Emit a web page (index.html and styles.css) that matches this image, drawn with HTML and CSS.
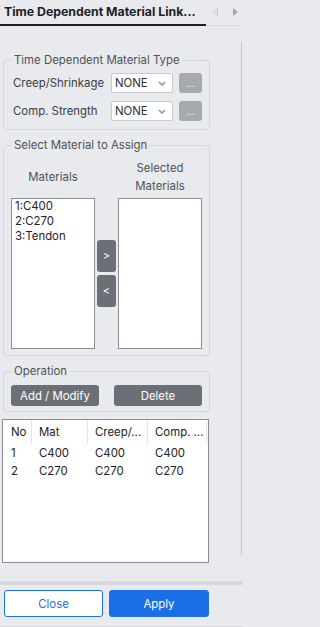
FILE: index.html
```html
<!DOCTYPE html>
<html>
<head>
<meta charset="utf-8">
<link rel="stylesheet" href="styles.css">
</head>
<body>
<div class="tabbar">
  <div class="tab">Time Dependent Material Link...</div>
  <div class="tab-arrows">
    <svg class="arr" width="5" height="8" viewBox="0 0 5 8"><path d="M4.5 0.5 L0.8 4 L4.5 7.5 Z" fill="none" stroke="#c9cacd" stroke-width="1"/></svg>
    <svg class="arr" width="5" height="8" viewBox="0 0 5 8"><path d="M0 0 L5 4 L0 8 Z" fill="#a7a9ad"/></svg>
  </div>
</div>
<div class="body">
  <div class="main">
    <fieldset class="group g1">
      <legend>Time Dependent Material Type</legend>
      <div class="row">
        <span class="label">Creep/Shrinkage</span>
        <div class="select"><span>NONE</span><svg width="8" height="5" viewBox="0 0 8 5"><path d="M1 1 L4 4 L7 1" fill="none" stroke="#8e9196" stroke-width="1.5"/></svg></div>
        <button class="dots">...</button>
      </div>
      <div class="row">
        <span class="label">Comp. Strength</span>
        <div class="select"><span>NONE</span><svg width="8" height="5" viewBox="0 0 8 5"><path d="M1 1 L4 4 L7 1" fill="none" stroke="#8e9196" stroke-width="1.5"/></svg></div>
        <button class="dots">...</button>
      </div>
    </fieldset>
    <fieldset class="group g2">
      <legend>Select Material to Assign</legend>
      <div class="assign">
        <div class="head">Materials</div>
        <div></div>
        <div class="head">Selected<br>Materials</div>
        <div class="list">
          <div>1:C400</div>
          <div>2:C270</div>
          <div>3:Tendon</div>
        </div>
        <div class="movers">
          <button class="mv">&gt;</button>
          <button class="mv">&lt;</button>
        </div>
        <div class="list"></div>
      </div>
    </fieldset>
    <fieldset class="group g3">
      <legend>Operation</legend>
      <div class="ops">
        <button class="op">Add / Modify</button>
        <button class="op">Delete</button>
      </div>
    </fieldset>
    <div class="table">
      <div class="th">No</div><div class="th">Mat</div><div class="th">Creep/...</div><div class="th">Comp. ...</div>
      <div class="td">1</div><div class="td">C400</div><div class="td">C400</div><div class="td">C400</div>
      <div class="td">2</div><div class="td">C270</div><div class="td">C270</div><div class="td">C270</div>
    </div>
  </div>
  <div class="scroll"></div>
</div>
<div class="footer">
  <button class="btn close">Close</button>
  <button class="btn apply">Apply</button>
</div>
</body>
</html>
```

FILE: styles.css
```css
* { box-sizing: border-box; }
html, body { margin: 0; padding: 0; }
body {
  width: 243px;
  height: 627px;
  overflow: hidden;
  background: #e9eaed;
  font-family: Inter, "Noto Sans", sans-serif;
  font-size: 11.4px;
  color: #3a3d42;
}
button { font-family: inherit; cursor: default; }

.tabbar {
  display: flex;
  height: 26px;
  border-bottom: 1px solid #dcdde0;
}
.tab {
  width: 206px;
  height: 26px;
  margin-bottom: -1px;
  border-bottom: 2px solid #1f2125;
  padding-left: 4px;
  font-size: 12.3px;
  font-weight: 700;
  line-height: 24px;
  color: #1f2125;
  white-space: nowrap;
  overflow: hidden;
}
.tab-arrows {
  display: flex;
  align-items: center;
  gap: 15px;
  margin-left: 7px;
  height: 24px;
}
.arr { display: block; }

.body {
  display: flex;
  height: 555px;
}
.main { width: 241px; }
.scroll {
  width: 1px;
  margin-top: 16px;
  height: 513px;
  background: #c4c5c9;
}

.group {
  margin: 8px 0 0 3px;
  width: 207px;
  min-width: 0;
  border: 1px solid #d5d7db;
  border-radius: 4px;
}
.group legend {
  padding: 0 2px;
  line-height: 14px;
  color: #4f5257;
}
.g1 { margin-top: 27px; padding: 6px 6px 8px 9px; }
.g1 legend { margin-left: -1px; }
.row {
  display: flex;
  align-items: center;
  height: 20px;
}
.row + .row { margin-top: 8px; }
.label { width: 98px; white-space: nowrap; }
.select {
  width: 62px;
  height: 20px;
  background: #fff;
  border: 1px solid #c8cacf;
  border-radius: 2px;
  display: flex;
  align-items: center;
  justify-content: space-between;
  padding: 0 6px 0 3px;
  color: #2e3035;
}
.select svg { display: block; }
.dots {
  margin-left: 6px;
  width: 23px;
  height: 20px;
  border: 0;
  border-radius: 3px;
  background: #a6a9ae;
  color: #fff;
  font-size: 10px;
  line-height: 20px;
  padding: 0;
}

.g2 { padding: 7px 6px 6px 7px; }
.g2 legend { margin-left: 1px; }
.assign {
  display: grid;
  grid-template-columns: 84px 19px 84px;
  column-gap: 2px;
}
.head {
  height: 36px;
  margin-bottom: 3px;
  display: flex;
  align-items: center;
  justify-content: center;
  text-align: center;
  line-height: 18px;
  color: #4f5257;
}
.list {
  height: 151px;
  background: #fff;
  border: 1px solid #8b8e93;
  padding: 0 3px;
  line-height: 15px;
  color: #1f2125;
}
.movers {
  display: flex;
  flex-direction: column;
  justify-content: center;
  gap: 3px;
}
.mv {
  width: 19px;
  height: 32px;
  border: 0;
  border-radius: 3px;
  background: #6b7077;
  color: #fff;
  font-size: 11px;
  padding: 0;
}

.g3 { padding: 7px 7px 5px 7px; }
.g3 legend { margin-left: 1px; }
.ops {
  display: flex;
  justify-content: space-between;
}
.op {
  width: 88px;
  height: 21px;
  border: 0;
  border-radius: 3px;
  background: #6b7077;
  color: #fff;
  font-size: 11.4px;
  padding: 0;
}

.table {
  margin: 7px 0 0 2px;
  width: 207px;
  height: 144px;
  background: #fff;
  border: 1px solid #8b8e93;
  display: grid;
  grid-template-columns: 29px 56px 60px 59px;
  grid-auto-rows: 18px;
  grid-template-rows: 24px;
  align-content: start;
  color: #1f2125;
}
.th {
  border-right: 1px solid #e3e4e6;
  line-height: 24px;
  padding-left: 7px;
  white-space: nowrap;
  overflow: hidden;
}
.th:first-child { padding-left: 8px; }
.td {
  line-height: 18px;
  padding-left: 7px;
  white-space: nowrap;
}
.td:nth-child(4n+1) { padding-left: 8px; }

.footer {
  border-top: 4px solid #d8d9dc;
  border-bottom: 1px solid #d8d9dc;
  height: 46px;
  padding: 5px 0 0 4px;
  display: flex;
  gap: 6px;
}
.btn {
  height: 27px;
  border-radius: 3px;
  font-size: 11.4px;
  padding: 0;
}
.close {
  width: 99px;
  background: #fff;
  border: 1px solid #1b6fe6;
  color: #1b6fe6;
}
.apply {
  width: 100px;
  background: #1b6fe6;
  border: 1px solid #1b6fe6;
  color: #fff;
}
```
